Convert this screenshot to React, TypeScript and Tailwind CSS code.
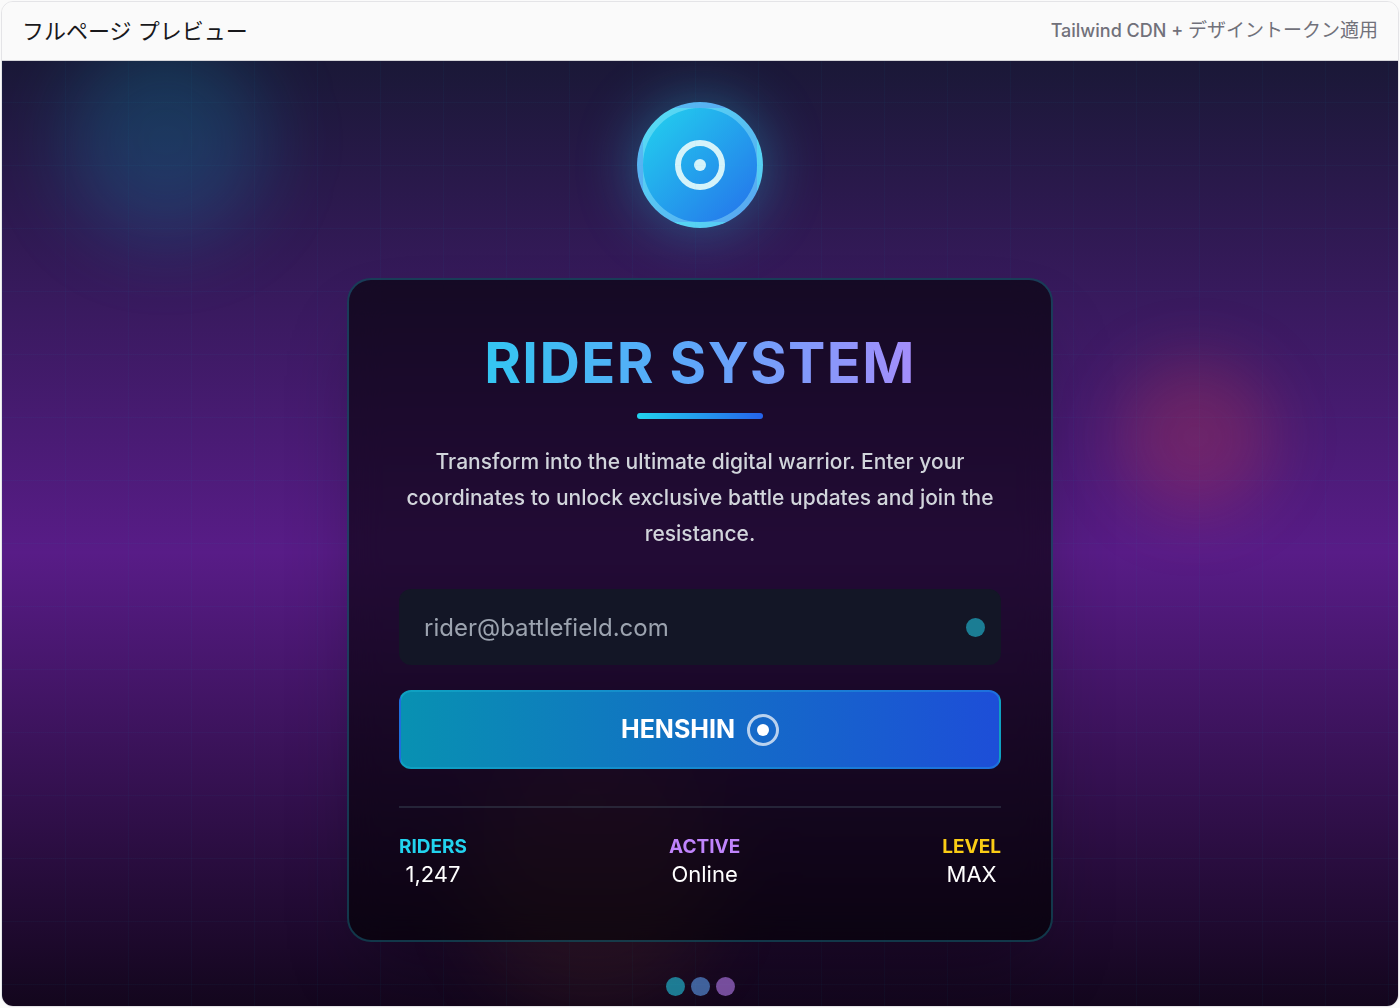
import React, { useState } from 'react'

const stats = [
  { label: 'RIDERS', value: '1,247', color: 'text-[#22d3ee]' },
  { label: 'ACTIVE', value: 'Online', color: 'text-[#c084fc]' },
  { label: 'LEVEL', value: 'MAX', color: 'text-[#facc15]' },
]

const indicators = ['bg-[#22d3ee]', 'bg-[#60a5fa]', 'bg-[#c084fc]']

function PreviewHeader() {
  return (
    <header className="flex h-[59px] items-center justify-between border-b border-[#d4d4d8] bg-[#fafafa] px-5">
      <h2 className="text-[22px] leading-8 text-[#18181b]">フルページ プレビュー</h2>
      <p className="text-[19px] leading-7 text-[#71717a]">
        <span className="text-[18px] font-medium">Tailwind CDN + </span>デザイントークン適用
      </p>
    </header>
  )
}

// Grid lines and the soft glows behind the card
function Backdrop() {
  return (
    <div className="pointer-events-none absolute inset-0">
      <div className="absolute inset-0 bg-[linear-gradient(rgba(6,182,212,0.035)_1px,transparent_1px),linear-gradient(90deg,rgba(6,182,212,0.035)_1px,transparent_1px)] bg-[size:63px_63px] bg-[position:0px_41px]" />
      <div className="absolute -top-[22px] left-[63px] size-[202px] rounded-full bg-[#06b6d4]/20 blur-[38px]" />
      <div className="absolute right-[126px] top-[300px] size-[152px] rounded-full bg-[#ef4444]/22 blur-[32px]" />
      <div className="absolute bottom-0 left-1/3 size-[252px] rounded-full bg-[#f59e0b]/8 blur-[38px]" />
    </div>
  )
}

function Emblem() {
  return (
    <div className="flex size-[126px] items-center justify-center rounded-full border-6 border-[#a5f3fc]/40 bg-linear-to-br/srgb from-[#22d3ee] to-[#2570eb] shadow-[0_0_60px_rgba(34,211,238,0.38)]">
      <div className="flex size-[50px] items-center justify-center rounded-full border-6 border-[#d4f3fa]">
        <div className="size-3 rounded-full bg-[#d4f3fa]" />
      </div>
    </div>
  )
}

function SignupCard() {
  const [email, setEmail] = useState('')

  return (
    <div className="w-full max-w-[706px] rounded-3xl border-2 border-[#22d3ee]/25 bg-black/60 px-[50px] pt-[52px] pb-[50px] text-center shadow-[0_40px_80px_-20px_rgba(0,0,0,0.3)] backdrop-blur-lg">
      <h1 className="bg-linear-to-r/srgb from-[#22d3ee] via-[#60a5fa] to-[#c084fc] bg-clip-text text-[56px] leading-[63px] font-bold tracking-wide text-transparent">
        RIDER SYSTEM
      </h1>
      <div className="mx-auto mt-[18px] h-[6px] w-[126px] rounded-full bg-linear-to-r/srgb from-[#22d3ee] to-[#2563eb]" />
      <p className="mt-[25px] text-[21px] leading-[36px] font-medium text-[#d1d5db]">
        Transform into the ultimate digital warrior. Enter your coordinates to unlock exclusive battle updates and join the resistance.
      </p>

      <form className="mt-[37px]" onSubmit={(e) => e.preventDefault()}>
        <div className="relative">
          <input
            type="email"
            aria-label="Email"
            value={email}
            onChange={(e) => setEmail(e.target.value)}
            placeholder="rider@battlefield.com"
            className="block h-[76px] w-full rounded-xl bg-[#131626] px-[25px] text-[24px] text-white outline-none placeholder:text-[#9ca3af]"
          />
          <span className="absolute inset-y-0 right-4 my-auto size-[19px] rounded-full bg-[#22d3ee]/55" />
        </div>
        <button
          type="submit"
          className="mt-[25px] flex h-[79px] w-full items-center justify-center gap-3 rounded-xl border-2 border-[#22d3ee]/25 bg-linear-to-r/srgb from-[#0891b2] to-[#1d4ed8] text-[25px] font-bold text-white"
        >
          HENSHIN
          <span className="flex size-8 items-center justify-center rounded-full border-3 border-white/70">
            <span className="size-3 rounded-full bg-white" />
          </span>
        </button>
      </form>

      <dl className="mt-[37px] flex justify-between border-t-2 border-[#374151]/50 pt-[26px]">
        {stats.map((stat) => (
          <div key={stat.label}>
            <dt className={`text-[19px] leading-[25px] font-bold ${stat.color}`}>{stat.label}</dt>
            <dd className="text-[22px] leading-[31px] text-white">{stat.value}</dd>
          </div>
        ))}
      </dl>
    </div>
  )
}

export default function App() {
  return (
    <div className="flex min-h-screen flex-col bg-[#fafafa] p-px font-['Inter','Noto_Sans_CJK_JP',sans-serif]">
      <div className="flex flex-1 flex-col overflow-hidden rounded-xl border border-[#e4e4e7]">
        <PreviewHeader />
        <main className="relative flex flex-1 flex-col items-center overflow-hidden bg-[linear-gradient(180deg,#1a1837_0%,#581c87_52%,#13061d_100%)] px-6 pt-[41px] pb-[9px]">
          <Backdrop />
          <Emblem />
          <div className="relative mt-[50px] flex w-full flex-col items-center">
            <SignupCard />
            <div className="mt-[35px] flex gap-[6px]">
              {indicators.map((color) => (
                <span key={color} className={`size-[19px] rounded-full opacity-57 ${color}`} />
              ))}
            </div>
          </div>
        </main>
      </div>
    </div>
  )
}
